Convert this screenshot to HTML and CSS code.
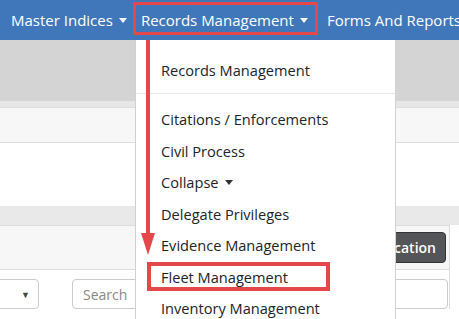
FILE: index.html
```html
<!DOCTYPE html>
<html>
<head>
<meta charset="utf-8">
<link rel="stylesheet" href="styles.css">
</head>
<body>
<div class="page">
  <nav class="topnav">
    <span class="nav-item nav-first">Master Indices<i class="caret"></i></span>
    <span class="nav-item nav-records">Records Management<i class="caret"></i></span>
    <span class="nav-item nav-forms">Forms And Reports</span>
  </nav>
  <div class="band band-dark"></div>
  <div class="band band-mid"></div>
  <div class="band band-light"></div>
  <div class="band band-white"></div>
  <div class="band band-gap"></div>
  <section class="card">
    <div class="card-header">
      <button class="btn-dark">Add New Location</button>
    </div>
    <div class="card-body">
      <div class="select-box"><span class="select-caret">&#9660;</span></div>
      <div class="search-box">Search</div>
    </div>
  </section>

  <div class="dropdown">
    <div class="dd-item">Records Management</div>
    <div class="dd-divider"></div>
    <div class="dd-item">Citations / Enforcements</div>
    <div class="dd-item">Civil Process</div>
    <div class="dd-item">Collapse<i class="caret caret-dark"></i></div>
    <div class="dd-item">Delegate Privileges</div>
    <div class="dd-item">Evidence Management</div>
    <div class="dd-item">Fleet Management</div>
    <div class="dd-item">Inventory Management</div>
  </div>

  <div class="mark mark-records"></div>
  <div class="mark mark-fleet"></div>
  <svg class="arrow" width="20" height="220" viewBox="0 0 20 220">
    <rect x="8" y="0" width="4" height="196" fill="#e5484a"/>
    <polygon points="3,193 17,193 10,215" fill="#e5484a"/>
  </svg>
</div>
</body>
</html>
```

FILE: styles.css
```css
html, body {
  margin: 0;
  padding: 0;
}
body {
  font-family: "Open Sans", "Noto Sans", sans-serif;
  background: #ffffff;
  overflow: hidden;
}
.page {
  position: relative;
  width: 459px;
  height: 319px;
  overflow: hidden;
}
.topnav {
  height: 40px;
  background: #3f77ba;
  display: flex;
  align-items: center;
  padding-left: 11px;
  white-space: nowrap;
  color: #ffffff;
  font-size: 15px;
}
.nav-item {
  display: flex;
  align-items: center;
}
.nav-records {
  margin-left: 14px;
}
.nav-forms {
  margin-left: 19px;
}
.caret {
  display: inline-block;
  width: 0;
  height: 0;
  border-left: 4px solid transparent;
  border-right: 4px solid transparent;
  border-top: 5px solid #ffffff;
  margin-left: 6px;
  margin-top: 1px;
}
.caret-dark {
  border-top-color: #333333;
}
.band-dark {
  height: 61px;
  background: #d4d4d4;
}
.band-mid {
  height: 6px;
  background: #e7e7e7;
}
.band-light {
  height: 34px;
  background: #f7f7f7;
  border-top: 1px solid #dddddd;
  border-bottom: 1px solid #dddddd;
}
.band-white {
  height: 63px;
  background: #ffffff;
}
.band-gap {
  height: 19px;
  background: #e9e9e9;
}
.card {
  width: 460px;
  margin-left: -12px;
  border: 1px solid #dcdcdc;
  border-bottom: none;
  background: #ffffff;
}
.card-header {
  height: 43px;
  background: #f7f7f7;
  border-bottom: 1px solid #dcdcdc;
  display: flex;
  align-items: center;
  justify-content: flex-end;
  padding-right: 3px;
}
.btn-dark {
  height: 31px;
  background: #545559;
  border: 1px solid #333333;
  border-radius: 4px;
  color: #ffffff;
  font-family: "Open Sans", "Noto Sans", sans-serif;
  font-weight: 600;
  font-size: 14px;
  padding: 0 9px 0 10px;
}
.card-body {
  display: flex;
  align-items: center;
  padding-top: 9px;
  gap: 33px;
}
.select-box {
  width: 50px;
  height: 30px;
  border: 1px solid #cccccc;
  border-radius: 4px;
  box-sizing: border-box;
  display: flex;
  align-items: center;
  justify-content: flex-end;
  padding-right: 8px;
}
.select-caret {
  font-size: 9px;
  color: #444444;
}
.search-box {
  width: 376px;
  height: 30px;
  border: 1px solid #cccccc;
  border-radius: 4px;
  box-sizing: border-box;
  display: flex;
  align-items: center;
  padding-left: 10px;
  color: #888888;
  font-size: 14px;
}
.dropdown {
  position: absolute;
  left: 135px;
  top: 40px;
  width: 261px;
  height: 300px;
  box-sizing: border-box;
  background: #ffffff;
  border: 1px solid #d0d0d0;
  border-top: none;
  padding-top: 14px;
  color: #212529;
  font-size: 14.6px;
}
.dd-item {
  display: flex;
  align-items: center;
  height: 31.5px;
  padding-left: 25px;
  white-space: nowrap;
}
.dd-divider {
  height: 1px;
  background: #e6e6e6;
  margin: 7px 0 10px;
}
.mark {
  position: absolute;
  border: 3px solid #e5484a;
  box-sizing: border-box;
}
.mark-records {
  left: 133px;
  top: 2px;
  width: 185px;
  height: 33px;
}
.mark-fleet {
  left: 147px;
  top: 262px;
  width: 183px;
  height: 29px;
  border-width: 4px;
}
.arrow {
  position: absolute;
  left: 138px;
  top: 40px;
}
```
